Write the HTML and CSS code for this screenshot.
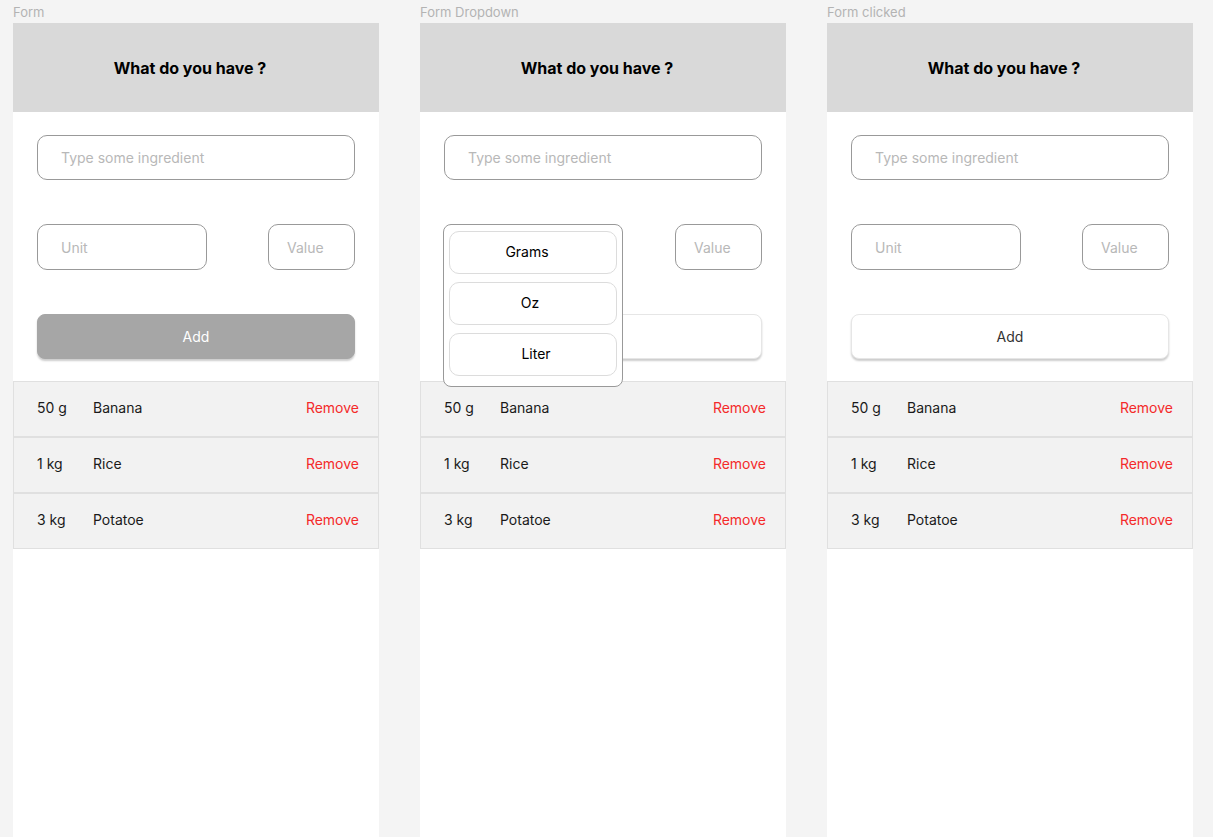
FILE: index.html
```html
<!DOCTYPE html>
<html lang="en">
<head>
  <meta charset="UTF-8" />
  <meta name="viewport" content="width=device-width, initial-scale=1.0"/>
  <title>What do you have ?</title>
  <link rel="stylesheet" href="styles.css">
</head>
<body>
  <div class="board">

    <section class="screen">
      <div class="label">Form</div>
      <div class="frame">
        <header class="head">What do you have ?</header>
        <div class="form">
          <div class="field wide">Type some ingredient</div>
          <div class="pair">
            <div class="field unit">Unit</div>
            <div class="field value">Value</div>
          </div>
          <button class="add disabled">Add</button>
        </div>
        <ul class="list">
          <li class="row"><span class="qty">50 g</span><span class="name">Banana</span><a class="remove">Remove</a></li>
          <li class="row"><span class="qty">1 kg</span><span class="name">Rice</span><a class="remove">Remove</a></li>
          <li class="row"><span class="qty">3 kg</span><span class="name">Potatoe</span><a class="remove">Remove</a></li>
        </ul>
      </div>
    </section>

    <section class="screen">
      <div class="label">Form Dropdown</div>
      <div class="frame">
        <header class="head">What do you have ?</header>
        <div class="form">
          <div class="field wide">Type some ingredient</div>
          <div class="pair">
            <div class="select">
              <div class="field unit">Unit</div>
              <div class="dropdown">
                <div class="option grams">Grams</div>
                <div class="option oz">Oz</div>
                <div class="option liter">Liter</div>
              </div>
            </div>
            <div class="field value">Value</div>
          </div>
          <button class="add">Add</button>
        </div>
        <ul class="list">
          <li class="row"><span class="qty">50 g</span><span class="name">Banana</span><a class="remove">Remove</a></li>
          <li class="row"><span class="qty">1 kg</span><span class="name">Rice</span><a class="remove">Remove</a></li>
          <li class="row"><span class="qty">3 kg</span><span class="name">Potatoe</span><a class="remove">Remove</a></li>
        </ul>
      </div>
    </section>

    <section class="screen">
      <div class="label">Form clicked</div>
      <div class="frame">
        <header class="head">What do you have ?</header>
        <div class="form">
          <div class="field wide">Type some ingredient</div>
          <div class="pair">
            <div class="field unit">Unit</div>
            <div class="field value">Value</div>
          </div>
          <button class="add">Add</button>
        </div>
        <ul class="list">
          <li class="row"><span class="qty">50 g</span><span class="name">Banana</span><a class="remove">Remove</a></li>
          <li class="row"><span class="qty">1 kg</span><span class="name">Rice</span><a class="remove">Remove</a></li>
          <li class="row"><span class="qty">3 kg</span><span class="name">Potatoe</span><a class="remove">Remove</a></li>
        </ul>
      </div>
    </section>

  </div>
</body>
</html>
```

FILE: styles.css
```css
body {
  margin: 0;
  font-family: Inter, 'Noto Sans', sans-serif;
  background: #f4f4f4;
  color: #1a1a1a;
  height: 837px;
  overflow: hidden;
}

.board {
  display: flex;
  gap: 41px;
  padding-left: 13px;
}

.screen {
  width: 366px;
  display: flex;
  flex-direction: column;
}

.label {
  height: 23px;
  font-size: 13px;
  line-height: 24px;
  color: #b3b3b3;
}

.frame {
  background: #fff;
  height: 814px;
}

.head {
  height: 89px;
  background: #d9d9d9;
  display: flex;
  align-items: center;
  justify-content: center;
  padding-right: 12px;
  font-size: 16px;
  font-weight: 700;
  color: #000;
}

.form {
  padding: 23px 24px 22px;
  display: flex;
  flex-direction: column;
  gap: 44px;
}

.field {
  box-sizing: border-box;
  height: 45px;
  border: 1px solid #999;
  border-radius: 10px;
  padding-left: 23px;
  display: flex;
  align-items: center;
  font-size: 14px;
  color: #b8b8b8;
  background: #fff;
}

.pair {
  display: flex;
  justify-content: space-between;
}

.pair .field {
  height: 46px;
}

.unit {
  width: 170px;
}

.value {
  width: 87px;
  padding-left: 18px;
}

.select {
  position: relative;
}

.dropdown {
  position: absolute;
  top: 0;
  left: -1px;
  width: 180px;
  box-sizing: border-box;
  padding: 6px 5px 10px;
  border: 1px solid #999;
  border-radius: 8px;
  background: #fff;
  display: flex;
  flex-direction: column;
  gap: 8px;
  z-index: 2;
}

.option {
  height: 43px;
  flex-shrink: 0;
  box-sizing: border-box;
  border: 1px solid #dcdcdc;
  border-radius: 10px;
  display: flex;
  align-items: center;
  justify-content: center;
  padding-bottom: 3px;
  font-size: 14px;
  color: #000;
}

.option.grams {
  padding-right: 12px;
}

.option.oz {
  padding-right: 6px;
}

.option.liter {
  padding-left: 6px;
}

.add {
  height: 45px;
  border: 1px solid #e6e6e6;
  border-radius: 8px;
  background: #fff;
  font-family: inherit;
  font-size: 14px;
  color: #333;
  box-shadow: 0 2px 2px rgba(0, 0, 0, 0.2);
}

.add.disabled {
  background: #a6a6a6;
  border-color: #a6a6a6;
  color: #fff;
}

.list {
  list-style: none;
  margin: 0;
  padding: 0;
}

.row {
  box-sizing: border-box;
  height: 56px;
  background: #f2f2f2;
  border: 1px solid #e0e0e0;
  display: flex;
  align-items: center;
  padding: 0 19px 3px 23px;
  font-size: 14px;
  color: #1a1a1a;
}

.qty {
  width: 56px;
}

.name {
  flex: 1;
}

.remove {
  color: #f42a2a;
}
```
